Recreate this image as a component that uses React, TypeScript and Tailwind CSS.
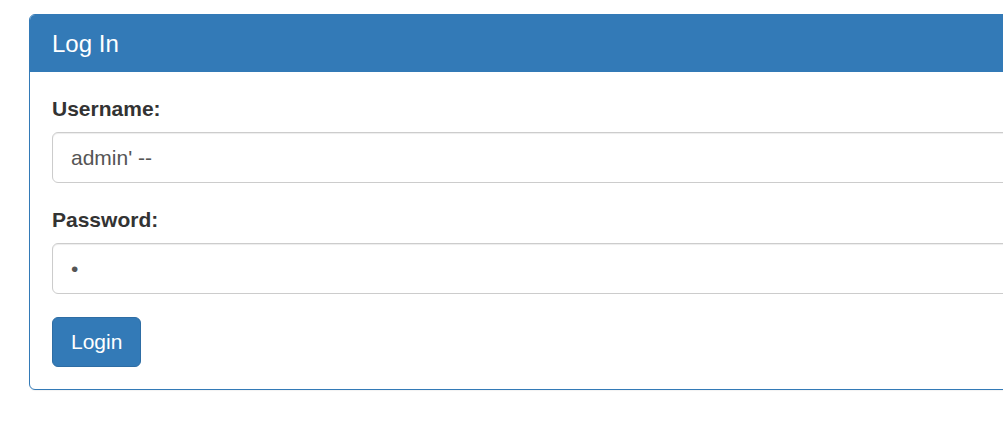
export default function App() {
  return (
    <div className="w-screen h-screen overflow-hidden bg-white font-['Liberation_Sans',Arial,sans-serif] text-[#333]">
      <div className="ml-[29px] mt-[14px] w-[1010px] rounded-[6px] border border-[#337ab7] bg-white shadow-[0_1px_1px_rgba(0,0,0,0.05)]">
        <div className="h-[57px] rounded-t-[5px] bg-[#337ab7] px-[22px] flex items-center">
          <h3 className="text-[24px] leading-[26px] text-white font-normal">Log In</h3>
        </div>
        <form className="px-[22px] pt-[22px] pb-[22px]" onSubmit={(e) => e.preventDefault()}>
          <div className="mb-[22px]">
            <label className="block text-[21px] leading-[30px] font-bold mb-[8px]">Username:</label>
            <input
              type="text"
              readOnly
              value="admin' --"
              className="block w-full h-[51px] rounded-[6px] border border-[#ccc] px-[18px] text-[21px] text-[#555] shadow-[inset_0_1px_1px_rgba(0,0,0,0.075)] outline-none"
            />
          </div>
          <div className="mb-[23px]">
            <label className="block text-[21px] leading-[30px] font-bold mb-[8px]">Password:</label>
            <input
              type="password"
              readOnly
              value="a"
              className="block w-full h-[51px] rounded-[6px] border border-[#ccc] px-[18px] text-[21px] text-[#555] shadow-[inset_0_1px_1px_rgba(0,0,0,0.075)] outline-none"
            />
          </div>
          <button
            type="submit"
            className="h-[50px] px-[18px] rounded-[6px] border border-[#2e6da4] bg-[#337ab7] text-white text-[21px] leading-[30px]"
          >
            Login
          </button>
        </form>
      </div>
    </div>
  );
}
